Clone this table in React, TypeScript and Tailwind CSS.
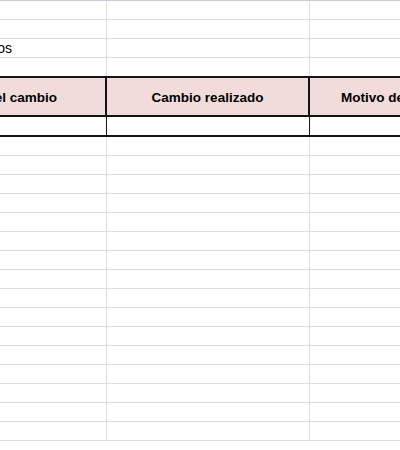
import React from "react";

const grid = "border-[#d9dee9]";

function GridRow({ children }: { children?: React.ReactNode }) {
  return (
    <div className={`flex h-[19px] border-b ${grid}`}>
      <div className={`w-[107px] shrink-0 border-r ${grid} relative`}>{children}</div>
      <div className={`w-[203px] shrink-0 border-r ${grid}`} />
      <div className="flex-1" />
    </div>
  );
}

export default function App() {
  const bottomRows = Array.from({ length: 16 });
  return (
    <div
      className="w-[400px] h-[450px] overflow-hidden bg-white text-black"
      style={{ fontFamily: "'Liberation Sans', Arial, sans-serif" }}
    >
      <div className="border-t border-[#c3cddc]" />
      <GridRow />
      <GridRow />
      <div className={`flex h-[19px] border-b ${grid}`}>
        <div className={`w-[107px] shrink-0 border-r ${grid} flex items-center`}>
          <div className="w-[12px] flex justify-end whitespace-nowrap text-[14px] leading-none">
            Registro de cambios
          </div>
        </div>
        <div className={`w-[203px] shrink-0 border-r ${grid}`} />
        <div className="flex-1" />
      </div>
      <div className="flex h-[18px]">
        <div className={`w-[107px] shrink-0 border-r ${grid}`} />
        <div className={`w-[203px] shrink-0 border-r ${grid}`} />
        <div className="flex-1" />
      </div>
      {/* header */}
      <div className="flex h-[41px] border-y-2 border-[#141414] bg-[#f2dcdb] text-[13.5px] font-bold">
        <div className="w-[107px] shrink-0 border-r-2 border-[#141414] flex items-center justify-end pr-[48px] pt-[3px] whitespace-nowrap">
          Fecha del cambio
        </div>
        <div className="w-[203px] shrink-0 border-r-2 border-[#141414] flex items-center justify-center pt-[3px] whitespace-nowrap">
          Cambio realizado
        </div>
        <div className="flex-1 flex items-center pl-[31px] pt-[3px] whitespace-nowrap overflow-hidden">
          Motivo del cambio
        </div>
      </div>
      <div className="flex h-[20px] border-b-2 border-[#141414]">
        <div className="w-[107px] shrink-0 border-r border-[#141414]" />
        <div className="w-[203px] shrink-0 border-r border-[#141414]" />
        <div className="flex-1" />
      </div>
      {bottomRows.map((_, i) => (
        <GridRow key={i} />
      ))}
    </div>
  );
}
